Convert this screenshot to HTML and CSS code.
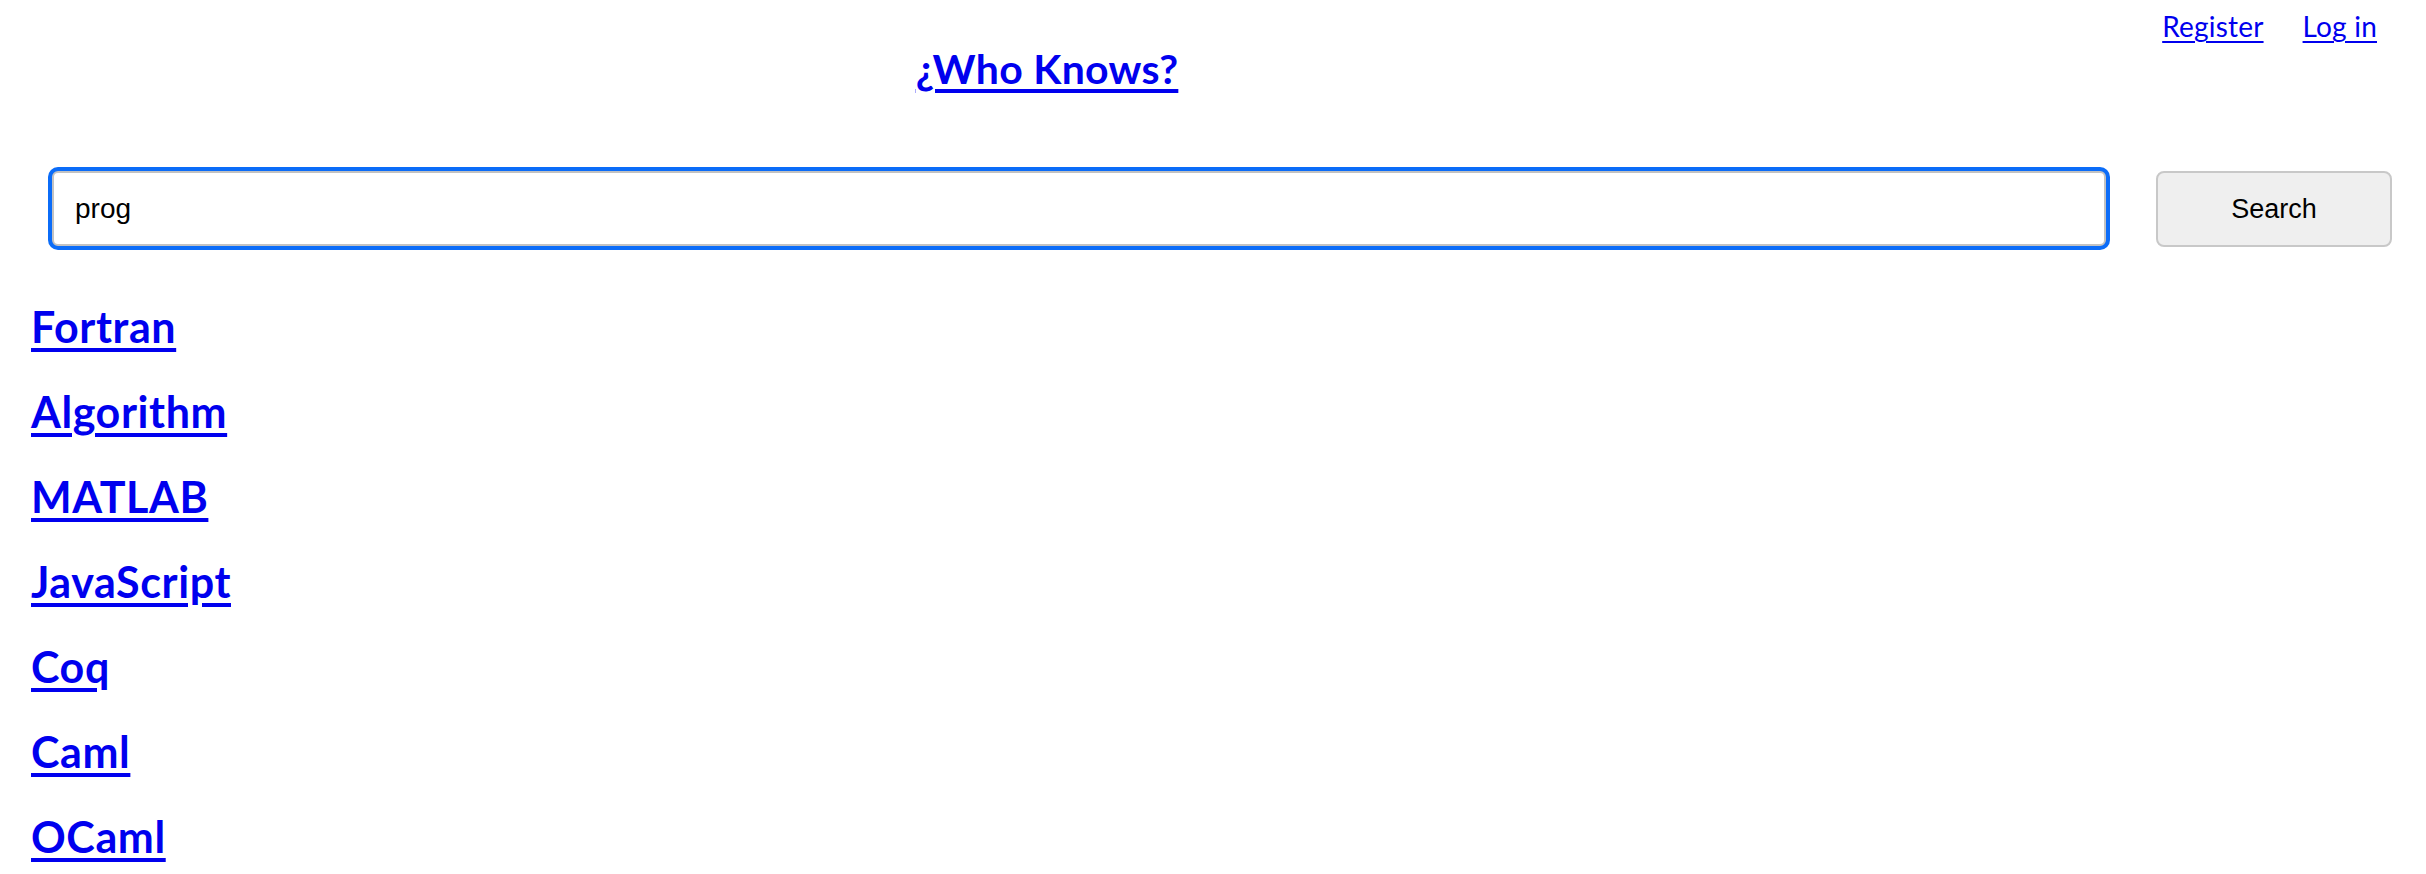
FILE: index.html
```html
<!DOCTYPE html>
<html lang="en">
<head>
<meta charset="utf-8">
<title>¿Who Knows?</title>
<link rel="stylesheet" href="styles.css">
</head>
<body>
<header class="top">
  <div class="brand"><a class="brand-link" href="#">¿Who Knows?</a></div>
  <nav class="nav">
    <a class="nav-link" href="#">Register</a>
    <a class="nav-link" href="#">Log in</a>
  </nav>
</header>
<form class="search">
  <input class="search-input" type="text" value="prog">
  <button class="search-btn" type="button">Search</button>
</form>
<main class="results">
  <h2 class="result"><a href="#">Fortran</a></h2>
  <h2 class="result"><a href="#">Algorithm</a></h2>
  <h2 class="result"><a href="#">MATLAB</a></h2>
  <h2 class="result"><a href="#">JavaScript</a></h2>
  <h2 class="result"><a href="#">Coq</a></h2>
  <h2 class="result"><a href="#">Caml</a></h2>
  <h2 class="result"><a href="#">OCaml</a></h2>
</main>
</body>
</html>
```
FILE: styles.css
```css
html, body {
  margin: 0;
  padding: 0;
  background: #ffffff;
}
body {
  font-family: Lato, "Noto Sans", sans-serif;
  color: #000;
}
a {
  color: #0000ee;
}
.top {
  display: flex;
  align-items: flex-start;
  height: 94px;
}
.brand {
  flex: 1;
  text-align: center;
  padding-top: 44px;
}
.brand-link {
  font-size: 41px;
  font-weight: 700;
  line-height: 1.2;
  letter-spacing: 0.3px;
  text-decoration-thickness: 4px;
  text-underline-offset: 5px;
}
.nav {
  width: 332px;
  box-sizing: border-box;
  display: flex;
  justify-content: flex-end;
  gap: 39px;
  padding-top: 10px;
  padding-right: 49px;
}
.nav-link {
  font-size: 28px;
  line-height: 1.2;
  letter-spacing: 0.2px;
  text-decoration-thickness: 2px;
  text-underline-offset: 4px;
}
.search {
  display: flex;
  align-items: flex-start;
  margin: 77px 0 0 0;
  padding: 0 34px 0 52px;
}
.search-input {
  flex: 1;
  box-sizing: border-box;
  height: 75px;
  margin: 0;
  border: 2px solid #c2c2c2;
  border-radius: 6px;
  box-shadow: 0 0 0 4px #0b6cf8;
  outline: none;
  padding: 0 21px;
  font-family: "Liberation Sans", Arial, sans-serif;
  font-size: 28px;
  color: #000;
  background: #fff;
}
.search-btn {
  box-sizing: border-box;
  width: 236px;
  height: 76px;
  margin: 0 0 0 50px;
  border: 2px solid #c8c8c8;
  border-radius: 8px;
  background: #efefef;
  font-family: "Liberation Sans", Arial, sans-serif;
  font-size: 27px;
  color: #000;
  padding: 0;
}
.results {
  display: flex;
  flex-direction: column;
  gap: 35px;
  margin-top: 55px;
  padding-left: 31px;
}
.result {
  margin: 0;
  font-size: 43px;
  font-weight: 700;
  line-height: 50px;
  letter-spacing: 0.6px;
}
.result a {
  text-decoration-thickness: 4px;
  text-underline-offset: 5px;
}
```
